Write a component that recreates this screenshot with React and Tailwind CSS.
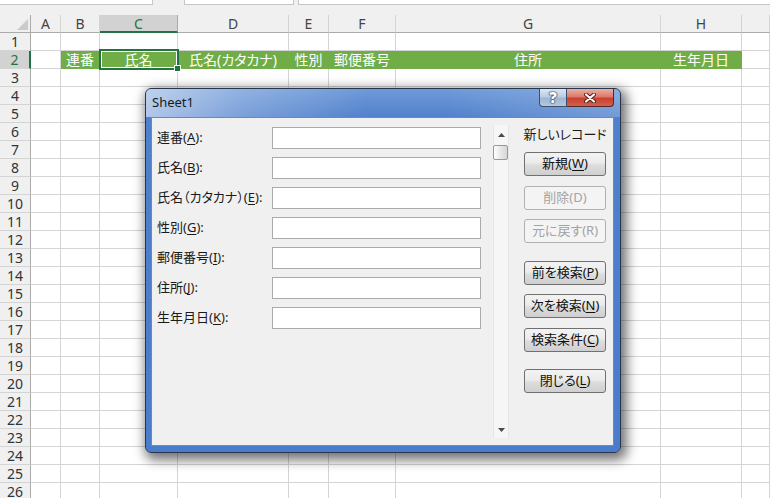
import React from 'react';

const COLS = [
  { key: 'A', w: 'w-[30px]' },
  { key: 'B', w: 'w-[39px]' },
  { key: 'C', w: 'w-[78px]' },
  { key: 'D', w: 'w-[111px]' },
  { key: 'E', w: 'w-[40px]' },
  { key: 'F', w: 'w-[67px]' },
  { key: 'G', w: 'w-[265px]' },
  { key: 'H', w: 'w-[81px]' },
  { key: '', w: 'flex-1' },
];

const HEADINGS = {
  B: '連番',
  C: '氏名',
  D: '氏名(カタカナ)',
  E: '性別',
  F: '郵便番号',
  G: '住所',
  H: '生年月日',
};

const ROWS = Array.from({ length: 26 }, (_, i) => i + 1);

const FIELDS = [
  ['連番', 'A'],
  ['氏名', 'B'],
  ['氏名（カタカナ）', 'E'],
  ['性別', 'G'],
  ['郵便番号', 'I'],
  ['住所', 'J'],
  ['生年月日', 'K'],
];

const Tri = ({ down }) => (
  <svg width="7" height="4" viewBox="0 0 7 4">
    <path d={down ? 'M0 0h7L3.5 4z' : 'M0 4h7L3.5 0z'} fill="#4a4a4a" />
  </svg>
);

const Btn = ({ label, acc, disabled, className = '' }) => (
  <div
    className={`h-[24px] w-[82px] shrink-0 rounded-[3px] border flex items-center justify-center text-[13px] ${
      disabled
        ? 'border-[#adb2b5] bg-[#f4f4f4] text-[#a3a3a3]'
        : 'border-[#707070] bg-[linear-gradient(180deg,#f3f3f3,#ebebeb_45%,#dddddd_55%,#cfcfcf)] text-[#111]'
    } ${className}`}
  >
    {label}(
    {disabled ? acc : <span className="underline underline-offset-2">{acc}</span>})
  </div>
);

const Dialog = () => (
  <div className="absolute left-[145px] top-[88px] z-20 w-[476px] h-[365px] flex flex-col rounded-[6px] border border-[#26364e] bg-[linear-gradient(180deg,#6f9ad8,#4f80cc_30px,#4b7cca)] shadow-[3px_4px_12px_3px_rgba(0,0,0,0.55)] font-['Noto_Sans','Noto_Sans_CJK_JP',sans-serif] [font-feature-settings:'palt']">
    {/* title bar */}
    <div className="h-[28px] flex items-start justify-between rounded-t-[5px] bg-[linear-gradient(90deg,rgba(255,255,255,0.55),rgba(255,255,255,0.25)_90px,rgba(255,255,255,0)_220px,rgba(255,255,255,0)_300px,rgba(255,255,255,0.2))]">
      <div className="pl-[6px] h-[28px] flex items-center text-[13px] text-[#1a1a1a]">Sheet1</div>
      <div className="flex mr-[6px]">
        <div className="w-[28px] h-[18px] flex items-center justify-center border border-t-0 border-[#3d506b] rounded-bl-[4px] bg-[linear-gradient(180deg,#dbe6f3,#bccde3_45%,#9fb6d3_55%,#b4c8e0)] text-white font-black text-[15px] leading-none [text-shadow:0_0_2px_#1f3250,0_0_1px_#1f3250,0_0_1px_#1f3250]">
          ?
        </div>
        <div className="w-[47px] h-[18px] flex items-center justify-center border border-t-0 border-l-0 border-[#4f2a28] rounded-br-[4px] bg-[linear-gradient(180deg,#eab0a4,#dc7a6c_45%,#c8402f_55%,#d4604d)]">
          <svg width="12" height="10" viewBox="0 0 12 10">
            <path d="M2 1.5l8 7M10 1.5l-8 7" stroke="#4a1c18" strokeWidth="4" strokeLinecap="round" />
            <path d="M2 1.5l8 7M10 1.5l-8 7" stroke="#ffffff" strokeWidth="2.2" strokeLinecap="round" />
          </svg>
        </div>
      </div>
    </div>

    {/* client area */}
    <div className="flex-1 flex ml-[5px] mr-[6px] mb-[6px] border border-[#6a8ab6] bg-[#f0f0f0] text-[#1a1a1a]">
      <div className="w-[341px] shrink-0 pt-[9px] flex flex-col gap-[8px]">
        {FIELDS.map(([label, acc]) => (
          <div key={acc} className="h-[22px] flex items-center">
            <div className="w-[120px] pl-[5px] text-[13px] whitespace-nowrap">
              {label}(<span className="underline underline-offset-2">{acc}</span>):
            </div>
            <div className="w-[209px] h-[22px] bg-white border border-[#ababab]" />
          </div>
        ))}
      </div>

      <div className="mt-[7px] w-[16px] h-[313px] shrink-0 flex flex-col border-x border-[#e6e6e6] bg-[#f6f6f6]">
        <div className="h-[20px] flex items-center justify-center">
          <Tri />
        </div>
        <div className="h-[15px] w-[15px] -ml-[1px] rounded-[2px] border border-[#989898] bg-[linear-gradient(90deg,#ffffff,#e8e8e8_50%,#d6d6d6)]" />
        <div className="flex-1" />
        <div className="h-[16px] flex items-center justify-center">
          <Tri down />
        </div>
      </div>

      <div className="ml-[15px] w-[82px] flex flex-col">
        <div className="h-[34px] flex items-center justify-center text-[13px] whitespace-nowrap">新しいレコード</div>
        <Btn label="新規" acc="W" />
        <Btn label="削除" acc="D" disabled className="mt-[10px]" />
        <Btn label="元に戻す" acc="R" disabled className="mt-[9px]" />
        <Btn label="前を検索" acc="P" className="mt-[18px]" />
        <Btn label="次を検索" acc="N" className="mt-[9px]" />
        <Btn label="検索条件" acc="C" className="mt-[10px]" />
        <Btn label="閉じる" acc="L" className="mt-[17px]" />
      </div>
    </div>
  </div>
);

export default function App() {
  return (
    <div className="relative w-[770px] h-[498px] overflow-hidden bg-white font-['Noto_Sans','Noto_Sans_CJK_JP',sans-serif]">
      {/* formula bar remnants */}
      <div className="h-[15px] flex items-start bg-[#f0f0f0]">
        <div className="w-[153px] h-[5px] bg-white border-b border-r border-[#c6c6c6]" />
        <div className="w-[31px]" />
        <div className="w-[110px] h-[5px] bg-white border-b border-x border-[#c6c6c6]" />
        <div className="w-[4px]" />
        <div className="flex-1 h-[5px] bg-white border-b border-l border-[#c6c6c6]" />
      </div>

      {/* column headers */}
      <div className="flex h-[18px] bg-[#f0f0f0] text-[14px] text-[#444]">
        <div className="relative w-[31px] shrink-0 border-r border-b border-[#ababab]">
          <svg className="absolute right-[2px] bottom-[2px]" width="11" height="11" viewBox="0 0 11 11">
            <path d="M11 0v11H0z" fill="#cbcbcb" />
          </svg>
        </div>
        {COLS.map((c) =>
          c.key === 'C' ? (
            <div key="C" className={`${c.w} shrink-0 flex items-center justify-center bg-[#d2d2d2] border-r border-[#ababab] border-b-2 border-b-[#217346] text-[#217346]`}>
              C
            </div>
          ) : (
            <div key={c.key || 'x'} className={`${c.w} shrink-0 flex items-center justify-center border-r border-b border-r-[#d4d4d4] border-b-[#ababab]`}>
              {c.key}
            </div>
          )
        )}
      </div>

      {/* rows */}
      {ROWS.map((r) => (
        <div key={r} className="flex h-[18px]">
          <div
            className={`w-[31px] shrink-0 flex items-center justify-center text-[14px] border-b border-b-[#d4d4d4] ${
              r === 2
                ? 'bg-[#d2d2d2] text-[#217346] border-r-2 border-r-[#217346]'
                : 'bg-[#f0f0f0] text-[#333] border-r border-r-[#ababab]'
            }`}
          >
            {r}
          </div>
          {COLS.map((c) => {
            const green = r === 2 && HEADINGS[c.key];
            return (
              <div
                key={c.key || 'x'}
                className={`${c.w} shrink-0 relative border-r border-b ${
                  green
                    ? 'bg-[#70ad47] border-[#70ad47] text-white text-[14px] [font-feature-settings:\'palt\'] flex items-center justify-center whitespace-nowrap'
                    : 'border-[#d4d4d4]'
                }`}
              >
                {green ? HEADINGS[c.key] : null}
                {r === 2 && c.key === 'C' && (
                  <div className="absolute -left-[1px] -top-[2px] w-[80px] h-[21px] z-10 border-2 border-[#217346] shadow-[inset_0_0_0_1px_#ffffff]">
                    <div className="absolute left-[73px] top-[14px] w-[7px] h-[7px] bg-[#217346] border border-white" />
                  </div>
                )}
              </div>
            );
          })}
        </div>
      ))}

      <Dialog />
    </div>
  );
}
